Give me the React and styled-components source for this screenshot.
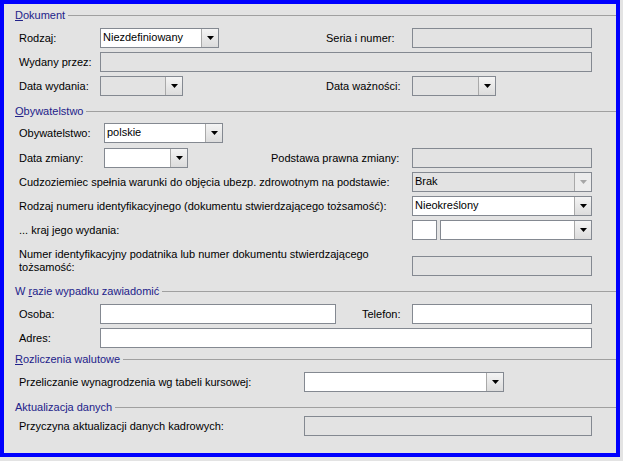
import React from 'react';
import styled, { createGlobalStyle } from 'styled-components';

const GlobalStyle = createGlobalStyle`
  html, body {
    margin: 0;
    padding: 0;
    background: #e3e3e3;
  }
  body {
    font-family: "Liberation Sans", Arial, sans-serif;
    font-size: 11px;
    color: #000;
  }
`;

const Frame = styled.div`
  width: 620px;
  height: 457px;
  box-sizing: border-box;
  border: 4px solid #0000ff;
  background: #e3e3e3;
  padding-top: 4px;
  display: flex;
  flex-direction: column;
`;

const Legend = styled.div`
  display: flex;
  align-items: center;
  height: 14px;
  margin-top: ${p => p.$mt || 0}px;
  padding-left: 11px;
  color: #22228a;
  white-space: nowrap;

  &::after {
    content: '';
    flex: 1;
    border-top: 1px solid #a0a0a0;
    margin-left: 3px;
  }
`;

const Row = styled.div`
  display: flex;
  align-items: ${p => (p.$top ? 'flex-start' : 'center')};
  height: ${p => p.$h || 20}px;
  margin-top: ${p => p.$mt || 0}px;
  padding: 0 24px 0 15px;
`;

const Label = styled.span`
  flex: ${p => (p.$w ? 'none' : 1)};
  width: ${p => (p.$w ? p.$w + 'px' : 'auto')};
  margin-left: ${p => (p.$push ? 'auto' : '0')};
  white-space: nowrap;
  line-height: 13px;
`;

const Field = styled.div`
  box-sizing: border-box;
  height: 20px;
  flex: ${p => (p.$w ? 'none' : 1)};
  width: ${p => (p.$w ? p.$w + 'px' : 'auto')};
  margin-top: ${p => p.$mt || 0}px;
  margin-right: ${p => p.$mr || 0}px;
  border: 1px solid #848991;
  background: ${p => (p.$off ? '#e3e3e3' : '#fff')};
`;

const Combo = styled.div`
  box-sizing: border-box;
  display: flex;
  height: 20px;
  flex: ${p => (p.$w ? 'none' : 1)};
  width: ${p => (p.$w ? p.$w + 'px' : 'auto')};
  margin-right: ${p => p.$mr || 0}px;
  border: 1px solid #848991;
  background: ${p => (p.$off ? '#e3e3e3' : '#fff')};
`;

const ComboText = styled.span`
  flex: 1;
  padding-left: 2px;
  line-height: 17px;
  white-space: nowrap;
  overflow: hidden;
`;

const ComboButton = styled.span`
  width: 16px;
  border-left: 1px solid #a9a9a9;
  background: ${p =>
    p.$off ? '#ececec' : 'linear-gradient(#f4f4f4, #dcdcdc)'};
  display: flex;
  align-items: center;
  justify-content: center;
`;

function Select({ w, mr, off, dim, children }) {
  return (
    <Combo $w={w} $mr={mr} $off={off}>
      <ComboText>{children}</ComboText>
      <ComboButton $off={dim}>
        <svg width="7" height="4" viewBox="0 0 7 4">
          <path d="M0 0h7L3.5 4z" fill={dim ? '#a6a6a6' : '#000'} />
        </svg>
      </ComboButton>
    </Combo>
  );
}

export default function App() {
  return (
    <>
      <GlobalStyle />
      <Frame>
        <Legend>
          <span><u>D</u>okument</span>
        </Legend>
        <Row $mt={6}>
          <Label $w={81}>Rodzaj:</Label>
          <Select w={119}>Niezdefiniowany</Select>
          <Label $w={86} $push>Seria i numer:</Label>
          <Field $w={180} $off />
        </Row>
        <Row $mt={4}>
          <Label $w={81}>Wydany przez:</Label>
          <Field $off />
        </Row>
        <Row $mt={4}>
          <Label $w={81}>Data wydania:</Label>
          <Select w={83} off />
          <Label $w={86} $push>Data ważności:</Label>
          <Select w={84} mr={96} off />
        </Row>

        <Legend $mt={8}>
          <span><u>O</u>bywatelstwo</span>
        </Legend>
        <Row $mt={5}>
          <Label $w={85}>Obywatelstwo:</Label>
          <Select w={119}>polskie</Select>
        </Row>
        <Row $mt={5}>
          <Label $w={85}>Data zmiany:</Label>
          <Select w={84} />
          <Label $w={141} $push>Podstawa prawna zmiany:</Label>
          <Field $w={180} $off />
        </Row>
        <Row $mt={4}>
          <Label>Cudzoziemiec spełnia warunki do objęcia ubezp. zdrowotnym na podstawie:</Label>
          <Select w={180} off dim>Brak</Select>
        </Row>
        <Row $mt={4}>
          <Label>Rodzaj numeru identyfikacyjnego (dokumentu stwierdzającego tożsamość):</Label>
          <Select w={180}>Nieokreślony</Select>
        </Row>
        <Row $mt={4}>
          <Label>... kraj jego wydania:</Label>
          <Field $w={25} $mr={3} />
          <Select w={152} />
        </Row>
        <Row $mt={8} $h={28} $top>
          <Label>
            Numer identyfikacyjny podatnika lub numer dokumentu stwierdzającego
            <br />
            tożsamość:
          </Label>
          <Field $w={180} $mt={8} $off />
        </Row>

        <Legend $mt={8}>
          <span>W <u>r</u>azie wypadku zawiadomić</span>
        </Legend>
        <Row $mt={6}>
          <Label $w={81}>Osoba:</Label>
          <Field $w={236} />
          <Label $w={50} $push>Telefon:</Label>
          <Field $w={180} />
        </Row>
        <Row $mt={4}>
          <Label $w={81}>Adres:</Label>
          <Field />
        </Row>

        <Legend $mt={4}>
          <span><u>R</u>ozliczenia walutowe</span>
        </Legend>
        <Row $mt={6}>
          <Label $w={285}>Przeliczanie wynagrodzenia wg tabeli kursowej:</Label>
          <Select w={200} />
        </Row>

        <Legend $mt={8}>
          <span>Aktualizacja danych</span>
        </Legend>
        <Row $mt={2}>
          <Label $w={285}>Przyczyna aktualizacji danych kadrowych:</Label>
          <Field $off />
        </Row>
      </Frame>
    </>
  );
}
